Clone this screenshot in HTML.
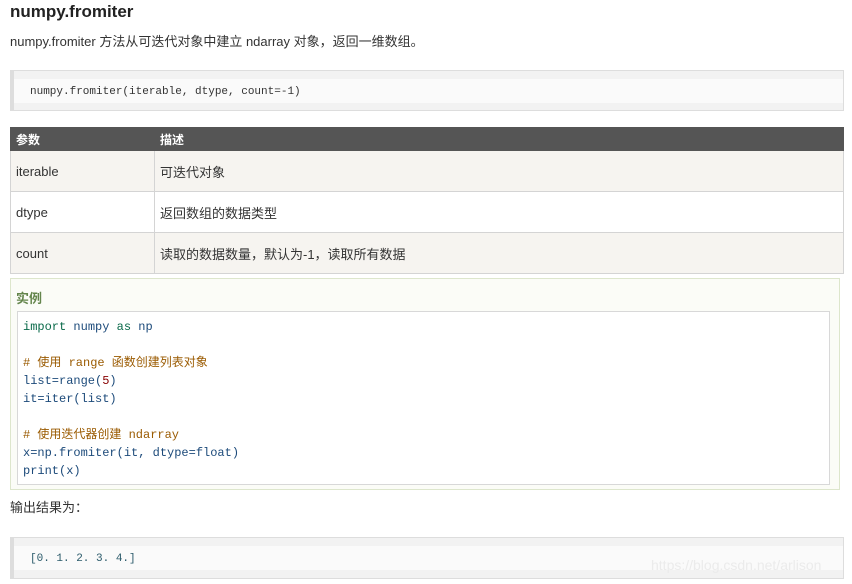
<!DOCTYPE html>
<html><head><meta charset="utf-8"><style>
body{margin:0;width:852px;height:584px;background:#fff;position:relative;overflow:hidden;font-family:"Liberation Sans","Noto Sans CJK SC",sans-serif;color:#333}
.a{position:absolute}
.mono{font-family:"Liberation Mono","Noto Sans CJK SC",monospace;font-size:12px}
.pre{background:linear-gradient(#f2f2f2 0,#f2f2f2 8px,#fafafa 8px,#fafafa 32px,#f2f2f2 32px);border:1px solid #ddd;border-left:4px solid #ddd;box-sizing:border-box}
td{border:1px solid #d4d4d4;font-size:13px;padding:0 5px;height:40px;color:#333}
</style></head><body>
<div class="a" style="left:10px;top:1px;font-size:17px;font-weight:bold;color:#222;line-height:22px">numpy.fromiter</div>
<div class="a" style="left:10px;top:33px;font-size:13px;line-height:18px">numpy.fromiter 方法从可迭代对象中建立 ndarray 对象，返回一维数组。</div>
<div class="a pre" style="left:10px;top:70px;width:834px;height:41px"></div>
<div class="a mono" style="left:30px;top:86px;font-size:11px;color:#333">numpy.fromiter(iterable, dtype, count=-1)</div>
<table class="a" style="left:10px;top:127px;width:834px;border-collapse:collapse">
<tr style="background:#555;color:#fff;font-weight:bold;font-size:12px"><td style="height:22px;width:133px;color:#fff;font-size:12px;border-color:#555">参数</td><td style="height:22px;color:#fff;font-size:12px;border-color:#555">描述</td></tr>
<tr style="background:#f6f4f0"><td>iterable</td><td>可迭代对象</td></tr>
<tr><td>dtype</td><td>返回数组的数据类型</td></tr>
<tr style="background:#f6f4f0"><td>count</td><td>读取的数据数量，默认为-1，读取所有数据</td></tr>
</table>
<div class="a" style="left:10px;top:278px;width:830px;height:212px;background:#fbfcf7;border:1px solid #dde6cc;box-sizing:border-box"></div>
<div class="a" style="left:16px;top:288px;font-size:13px;font-weight:bold;color:#64854c">实例</div>
<div class="a" style="left:17px;top:311px;width:813px;height:174px;background:#fff;border:1px solid #d8d8d8;box-sizing:border-box"></div>
<div class="a mono" style="left:23px;top:318px;line-height:18px;white-space:pre;color:#1c4a7a"><span style="color:#0a6a4a">import</span> numpy <span style="color:#0a6a4a">as</span> np

<span style="color:#9a5a00"># 使用 range 函数创建列表对象</span>
list=range(<span style="color:#800">5</span>)
it=iter(list)

<span style="color:#9a5a00"># 使用迭代器创建 ndarray</span>
x=np.fromiter(it, dtype=float)
print(x)</div>
<div class="a" style="left:10px;top:499px;font-size:13px;line-height:18px">输出结果为：</div>
<div class="a pre" style="left:10px;top:537px;width:834px;height:42px"></div>
<div class="a mono" style="left:30px;top:553px;font-size:11px;color:#2a5a6a">[0. 1. 2. 3. 4.]</div>
<div class="a" style="left:651px;top:557px;font-size:14px;color:#ebebeb">https://blog.csdn.net/arlison</div>
</body></html>
